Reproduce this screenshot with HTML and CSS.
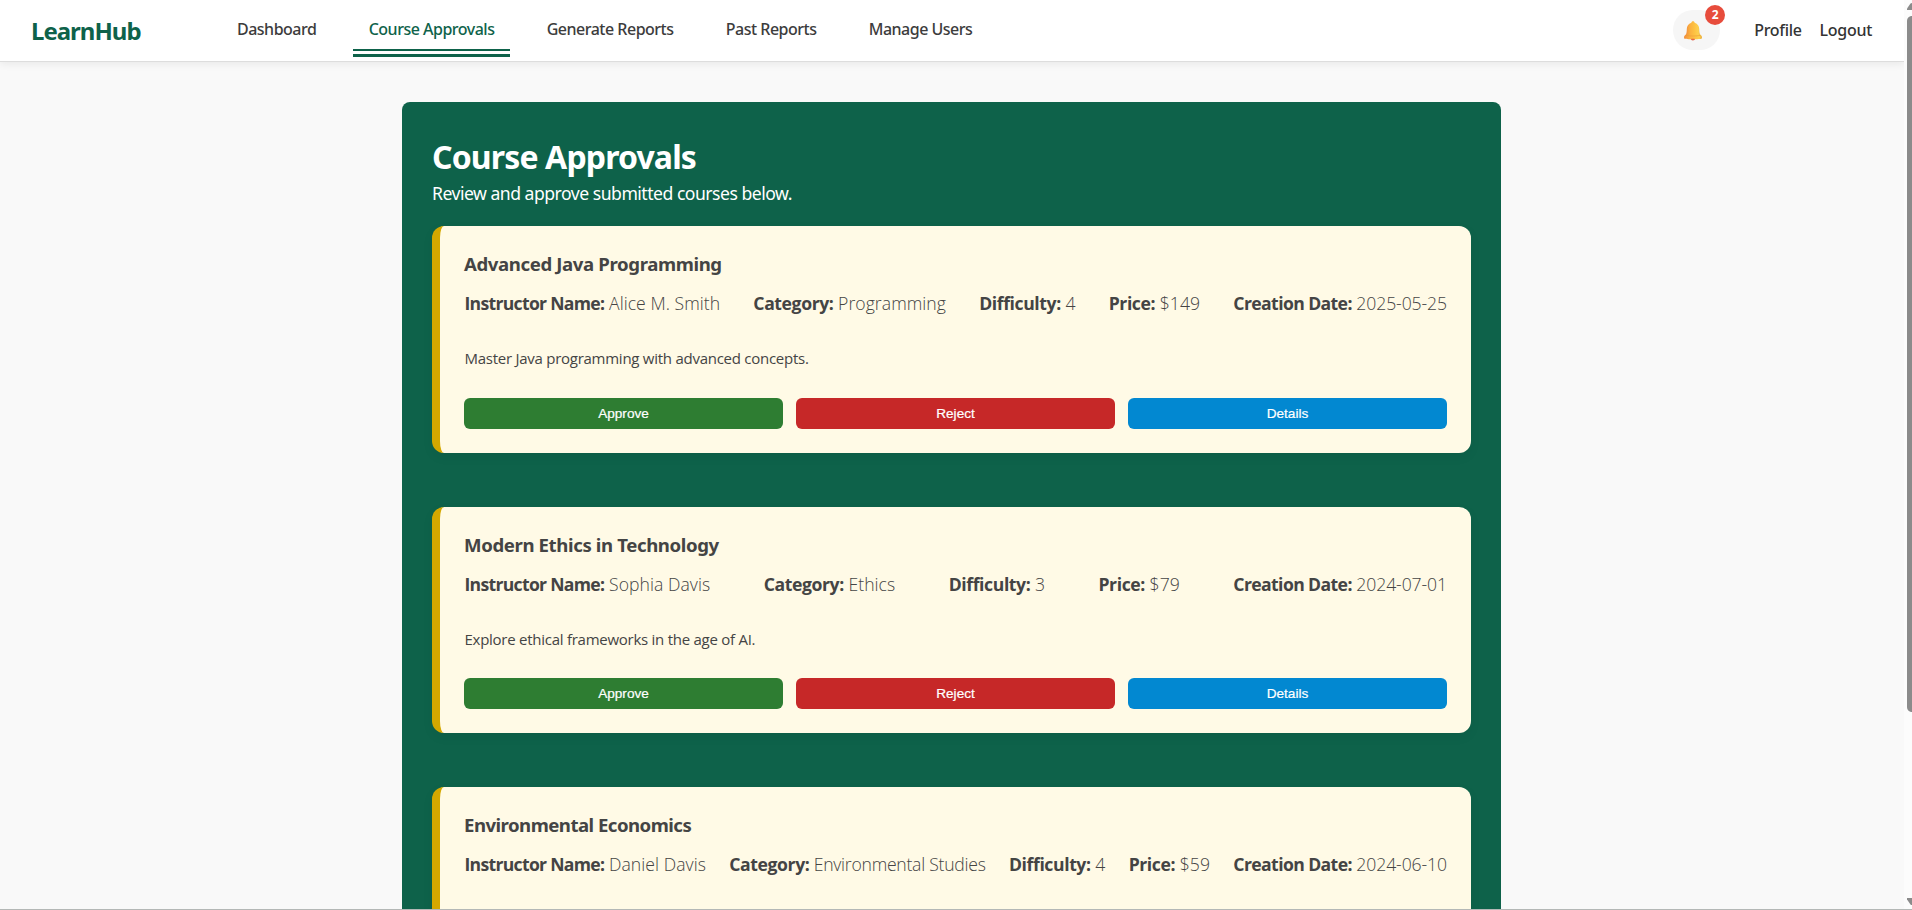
FILE: index.html
```
<!DOCTYPE html>
<html lang="en">
<head>
<meta charset="utf-8">
<title>LearnHub - Course Approvals</title>
<link rel="stylesheet" href="styles.css">
</head>
<body>
<div class="viewport">
  <div class="page">
    <header class="navbar">
      <div class="logo">LearnHub</div>
      <nav class="nav-links">
        <a class="nav-link">Dashboard</a>
        <a class="nav-link nav-link--active">Course Approvals</a>
        <a class="nav-link">Generate Reports</a>
        <a class="nav-link">Past Reports</a>
        <a class="nav-link">Manage Users</a>
      </nav>
      <div class="nav-right">
        <div class="bell">
          <svg class="bell-icon" width="18" height="20" viewBox="0 0 18 20">
            <defs>
              <linearGradient id="gold" x1="0" y1="0" x2="1" y2="0">
                <stop offset="0" stop-color="#f08c3c"/>
                <stop offset=".3" stop-color="#fbb040"/>
                <stop offset=".6" stop-color="#fdc243"/>
                <stop offset=".85" stop-color="#fcd050"/>
                <stop offset="1" stop-color="#e8a838"/>
              </linearGradient>
            </defs>
            <path d="M6.500 17.500h4.800c-.4 2.600-4.400 2.600-4.800 0z" fill="#e2604a"/>
            <path d="M9 .2c1 0 1.500.6 1.700 1.500 3 1 4.500 3.400 4.500 6.400 0 3 .4 4.900 1.300 6.300h-15c.9-1.400 1.300-3.300 1.300-6.300 0-3 1.500-5.400 4.500-6.400C7.500.8 8 .2 9 .2z" fill="url(#gold)"/>
            <path d="M1.400 13.800h15.200c1.500 1.300 1.700 3.300.9 4-.8.6-16.200.6-17 0-.8-.7-.6-2.700.9-4z" fill="url(#gold)"/>
            <path d="M1.700 14.400c4 .8 10.600.8 14.600 0" fill="none" stroke="#eb9838" stroke-width=".6"/>
            <path d="M7.200 17.700h3.400c-.4 1.500-3 1.500-3.400 0z" fill="#e2604a"/>
          </svg>
          <span class="badge">2</span>
        </div>
        <a class="account-link">Profile</a>
        <a class="account-link">Logout</a>
      </div>
    </header>
    <main class="panel">
      <h1 class="panel-title">Course Approvals</h1>
      <p class="panel-sub">Review and approve submitted courses below.</p>
      <div class="cards">
        <article class="card">
          <h2 class="card-title">Advanced Java Programming</h2>
          <div class="meta">
            <span class="meta-item"><b class="meta-label meta-label--first">Instructor Name:</b> Alice M. Smith</span>
            <span class="meta-item"><b class="meta-label">Category:</b> Programming</span>
            <span class="meta-item"><b class="meta-label">Difficulty:</b> 4</span>
            <span class="meta-item"><b class="meta-label">Price:</b> $149</span>
            <span class="meta-item meta-item--date"><b class="meta-label">Creation Date:</b> 2025-05-25</span>
          </div>
          <p class="desc">Master Java programming with advanced concepts.</p>
          <div class="actions">
            <button class="btn btn--approve">Approve</button>
            <button class="btn btn--reject">Reject</button>
            <button class="btn btn--details">Details</button>
          </div>
        </article>
        <article class="card">
          <h2 class="card-title">Modern Ethics in Technology</h2>
          <div class="meta">
            <span class="meta-item"><b class="meta-label meta-label--first">Instructor Name:</b> Sophia Davis</span>
            <span class="meta-item"><b class="meta-label">Category:</b> Ethics</span>
            <span class="meta-item"><b class="meta-label">Difficulty:</b> 3</span>
            <span class="meta-item"><b class="meta-label">Price:</b> $79</span>
            <span class="meta-item meta-item--date"><b class="meta-label">Creation Date:</b> 2024-07-01</span>
          </div>
          <p class="desc">Explore ethical frameworks in the age of AI.</p>
          <div class="actions">
            <button class="btn btn--approve">Approve</button>
            <button class="btn btn--reject">Reject</button>
            <button class="btn btn--details">Details</button>
          </div>
        </article>
        <article class="card">
          <h2 class="card-title card-title--tight">Environmental Economics</h2>
          <div class="meta">
            <span class="meta-item"><b class="meta-label meta-label--first">Instructor Name:</b> Daniel Davis</span>
            <span class="meta-item meta-item--long"><b class="meta-label">Category:</b> Environmental Studies</span>
            <span class="meta-item"><b class="meta-label">Difficulty:</b> 4</span>
            <span class="meta-item"><b class="meta-label">Price:</b> $59</span>
            <span class="meta-item meta-item--date"><b class="meta-label">Creation Date:</b> 2024-06-10</span>
          </div>
        </article>
      </div>
    </main>
  </div>
  <div class="scrollbar">
    <svg width="8" height="909" viewBox="0 0 8 909">
      <path d="M3 10V8.500L6.500 3.500Q7 3 8 3v7z" fill="#8b8b8b"/>
      <path d="M8 16H7q-4 1-4 5v686q0 4 4 5h1z" fill="#8b8b8b"/>
      <path d="M3 898h5v7q-1 0-1.500-.5L3 899.500z" fill="#8b8b8b"/>
    </svg>
  </div>
</div>
</body>
</html>
```
FILE: styles.css
```
* { box-sizing: border-box; }

body {
  margin: 0;
  font-family: "Noto Sans", "Open Sans", sans-serif;
  color: #444;
  overflow: hidden;
}

.viewport {
  display: flex;
  height: 910px;
  overflow: hidden;
  border-bottom: 1px solid #b4b8b6;
  background: #f9f9f9;
}

.page {
  flex: 1;
  height: 909px;
  overflow: hidden;
}

.scrollbar {
  width: 8px;
  background: #fcfcfc;
}
.scrollbar svg { display: block; }

/* Navigation */
.navbar {
  display: flex;
  align-items: flex-start;
  height: 62px;
  padding: 0 32px 0 31px;
  background: #fff;
  border-bottom: 1px solid #ddd;
  box-shadow: 0 2px 8px rgba(0, 0, 0, .07);
}

.logo {
  width: 190px;
  padding-top: 13px;
  font-size: 24px;
  line-height: 36px;
  font-weight: 700;
  letter-spacing: -1px;
  color: #0e624a;
}

.nav-links {
  display: flex;
  gap: 20.3px;
  padding-top: 13px;
}

.nav-link {
  height: 44px;
  padding: 4px 16px 0;
  font-size: 16px;
  line-height: 24px;
  font-weight: 500;
  letter-spacing: -.5px;
  color: #3c3c3c;
}

.nav-link--active {
  color: #0e624a;
  background: linear-gradient(#0e624a, #0e624a) 0 36px / 100% 2px no-repeat;
  border-bottom: 3px solid #0e624a;
}

.nav-right {
  display: flex;
  align-items: flex-start;
  margin-left: auto;
  padding-top: 10px;
}

.bell {
  position: relative;
  width: 47px;
  height: 40px;
  margin-right: 34px;
  padding: 11px 0 0 11px;
  border-radius: 20px;
  background: #f6f6f6;
}
.bell-icon { display: block; }

.badge {
  position: absolute;
  top: -5px;
  right: -5px;
  width: 20px;
  height: 20px;
  border-radius: 50%;
  background: #e74c3c;
  color: #fff;
  font-size: 12px;
  line-height: 19px;
  font-weight: 700;
  text-align: center;
}

.account-link {
  padding-top: 8px;
  font-size: 16px;
  line-height: 24px;
  font-weight: 500;
  letter-spacing: -.3px;
  color: #333;
}
.account-link + .account-link { margin-left: 18px; }

/* Approval panel */
.panel {
  width: 1099px;
  margin: 40px 0 0 402px;
  padding: 30px;
  border-radius: 8px;
  background: #0e624a;
  color: #fff;
}

.panel-title {
  margin: 0;
  padding-top: 1px;
  font-size: 32px;
  line-height: 47px;
  font-weight: 700;
  letter-spacing: -.86px;
}

.panel-sub {
  margin: 0 0 20px;
  font-size: 17.6px;
  line-height: 26px;
  letter-spacing: -.5px;
}

.cards {
  display: flex;
  flex-direction: column;
  gap: 54px;
}

.card {
  height: 226.6px;
  padding: 24px;
  border-left: 8px solid #d4a800;
  border-radius: 12px;
  background: #fffae6;
  color: #444;
  box-shadow: 0 4px 12px rgba(0, 0, 0, .05);
}

.card-title {
  margin: 0 0 12px;
  font-size: 18.6px;
  line-height: 27px;
  font-weight: 700;
  letter-spacing: -.38px;
}
.card-title--tight { letter-spacing: -.52px; }

.meta {
  display: flex;
  justify-content: space-between;
  margin-bottom: 30px;
  padding-left: .5px;
  font-family: "Open Sans", "Noto Sans", sans-serif;
  font-size: 17.6px;
  line-height: 28px;
  font-weight: 340;
  white-space: nowrap;
}

.meta-item { letter-spacing: .05px; }
.meta-item--long { letter-spacing: -.25px; }
.meta-item--date { letter-spacing: -.1px; }

.meta-label {
  font-weight: 700;
  letter-spacing: -.4px;
}
.meta-label--first { letter-spacing: -.7px; }
.meta-item--date .meta-label { letter-spacing: -.6px; }

.desc {
  margin: 0 0 28.6px;
  padding-left: .5px;
  font-family: "Open Sans", "Noto Sans", sans-serif;
  font-size: 15px;
  line-height: 22px;
  letter-spacing: -.26px;
}

.actions {
  display: grid;
  grid-template-columns: repeat(3, 1fr);
  gap: 13px;
}

.btn {
  height: 31px;
  padding: 0;
  border: 0;
  border-radius: 6px;
  color: #fff;
  font: 500 13.6px "Liberation Sans", Arial, sans-serif;
  -webkit-text-stroke: .2px #fff;
}
.btn--approve { background: #2e7d32; }
.btn--reject { background: #c62828; }
.btn--details { background: #0288d1; }
```
